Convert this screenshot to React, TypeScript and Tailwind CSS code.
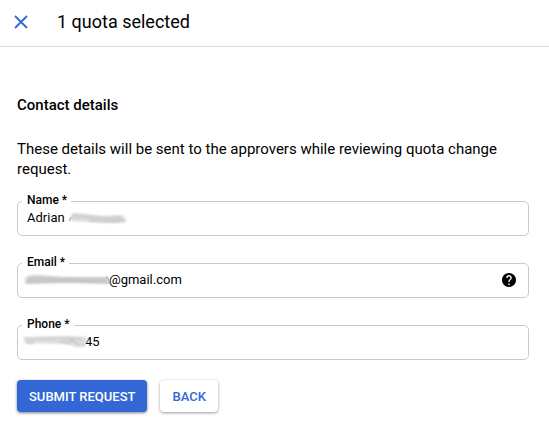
import type { ReactNode } from "react";

type FieldProps = {
  id: string;
  label: string;
  type?: string;
  value: string;
  inputClass?: string;
  children?: ReactNode;
};

function Field({ id, label, type = "text", value, inputClass = "pl-[9px]", children }: FieldProps) {
  return (
    <div className="relative flex h-[35px] items-center rounded-[5px] border border-[#c8c9cb]">
      <label
        htmlFor={id}
        className="absolute -top-2.5 left-1 bg-white pl-[5px] pr-1 text-[12px] leading-4 font-medium"
      >
        {label} *
      </label>
      <input
        id={id}
        type={type}
        defaultValue={value}
        className={`h-full w-full min-w-0 rounded-[5px] bg-transparent pr-3 pb-0.5 text-[13px] outline-none ${inputClass}`}
      />
      {children}
    </div>
  );
}

function NameSmudge() {
  return (
    <svg className="pointer-events-none absolute top-2 left-[49px]" width="64" height="18" viewBox="0 0 64 18" aria-hidden="true">
      <defs>
        <filter id="soft1" x="-10%" y="-40%" width="120%" height="180%">
          <feGaussianBlur stdDeviation="0.8" />
        </filter>
      </defs>
      <g filter="url(#soft1)">
        <path d="M5 3 L18 4 L38 6 L55 5 L60 11 L50 13 L28 12 L3 11 Z" fill="#d9d9d9" />
        <path d="M6 5 C18 6 30 10 54 8" fill="none" stroke="#c6c6c6" strokeWidth="1.5" />
        <path d="M22 11 C34 12 48 12 58 11" fill="none" stroke="#bcbcbc" strokeWidth="1.5" />
      </g>
      <path d="M2 11 L4 7" stroke="#b39b8d" strokeWidth="1" />
    </svg>
  );
}

function EmailSmudge() {
  return (
    <svg className="pointer-events-none absolute top-2 left-1" width="90" height="18" viewBox="0 0 90 18" aria-hidden="true">
      <defs>
        <filter id="soft2" x="-10%" y="-40%" width="120%" height="180%">
          <feGaussianBlur stdDeviation="0.8" />
        </filter>
      </defs>
      <g filter="url(#soft2)">
        <path d="M3 6 L8 3 L18 3 L40 5 L86 5 L87 12 L50 11 L3 12 Z" fill="#d4d4d4" />
        <path d="M6 7 L28 6 L86 7" fill="none" stroke="#bdbdbd" strokeWidth="1.5" />
        <path d="M5 10 L40 9 L86 10" fill="none" stroke="#b6b6b6" strokeWidth="1.5" />
      </g>
      <path d="M84 5 C88 6 87 10 87 12" fill="none" stroke="#83a9c5" strokeWidth="1" />
    </svg>
  );
}

function PhoneSmudge() {
  return (
    <svg className="pointer-events-none absolute top-2 left-1" width="68" height="20" viewBox="0 0 68 20" aria-hidden="true">
      <defs>
        <filter id="soft3" x="-10%" y="-40%" width="120%" height="180%">
          <feGaussianBlur stdDeviation="1.2" />
        </filter>
      </defs>
      <g filter="url(#soft3)">
        <path d="M1 3 L50 2 L65 3 L62 13 L54 13 L44 10 L3 9 Z" fill="#dcdcdc" />
        <path d="M4 5 L34 4 L60 5" fill="none" stroke="#cfcfcf" strokeWidth="2" />
        <path d="M5 9 L12 9 M38 8 L46 9 L50 6 L54 9 L58 12" fill="none" stroke="#c0c0c0" strokeWidth="1.5" />
      </g>
      <path d="M62 12 L66 5" stroke="#c4c4c4" strokeWidth="1" />
    </svg>
  );
}

export default function App() {
  return (
    <main className="min-h-screen bg-white font-[Roboto,sans-serif] text-black">
      <header className="flex h-[47px] items-center gap-[29px] border-b border-[#dadce0] px-3.5 pb-0.5">
        <button type="button" aria-label="Close" className="text-[#3367d6]">
          <svg width="14" height="14" viewBox="0 0 14 14" fill="none" stroke="currentColor" strokeWidth="1.8" aria-hidden="true">
            <path d="M1 1L13 13M13 1L1 13" />
          </svg>
        </button>
        <h1 className="text-[18px] leading-6">1 quota selected</h1>
      </header>
      <form className="px-[17px] pr-5 pt-12" onSubmit={(e) => e.preventDefault()}>
        <h2 className="text-[15px] leading-5 font-medium">Contact details</h2>
        <p className="mt-6 text-[15px] leading-5">
          These details will be sent to the approvers while reviewing quota change request.
        </p>
        <div className="mt-[22px] flex flex-col gap-[27px]">
          <Field id="name" label="Name" value="Adrian">
            <NameSmudge />
          </Field>
          <Field id="email" label="Email" value="@gmail.com" inputClass="pl-[91px]">
            <EmailSmudge />
            <button type="button" aria-label="Email help" className="mr-3 shrink-0 pb-0.5">
              <svg width="14" height="14" viewBox="2 2 20 20" aria-hidden="true">
                <path d="M12 2C6.48 2 2 6.48 2 12s4.480 10 10 10 10-4.480 10-10S17.520 2 12 2zm1 17h-2v-2h2v2zm2.070-7.750l-.9.920C13.450 12.900 13 13.500 13 15h-2v-.5c0-1.100.45-2.100 1.170-2.830l1.240-1.260c.37-.36.59-.86.59-1.410 0-1.100-.9-2-2-2s-2 .9-2 2H8c0-2.210 1.790-4 4-4s4 1.790 4 4c0 .88-.36 1.680-.93 2.250z" />
              </svg>
            </button>
          </Field>
          <Field id="phone" label="Phone" type="tel" value="45" inputClass="pl-[67px]">
            <PhoneSmudge />
          </Field>
        </div>
        <div className="mt-5 flex gap-[13px] pb-3">
          <button
            type="submit"
            className="h-8 rounded bg-[#3367d6] px-3 pt-px text-[13px] font-medium text-white shadow-[0_1px_3px_rgba(0,0,0,0.5)]"
          >
            SUBMIT REQUEST
          </button>
          <button
            type="button"
            className="h-8 rounded bg-white px-3 pt-px text-[13px] font-medium text-[#3367d6] shadow-[0_1px_3px_rgba(0,0,0,0.4)]"
          >
            BACK
          </button>
        </div>
      </form>
    </main>
  );
}
